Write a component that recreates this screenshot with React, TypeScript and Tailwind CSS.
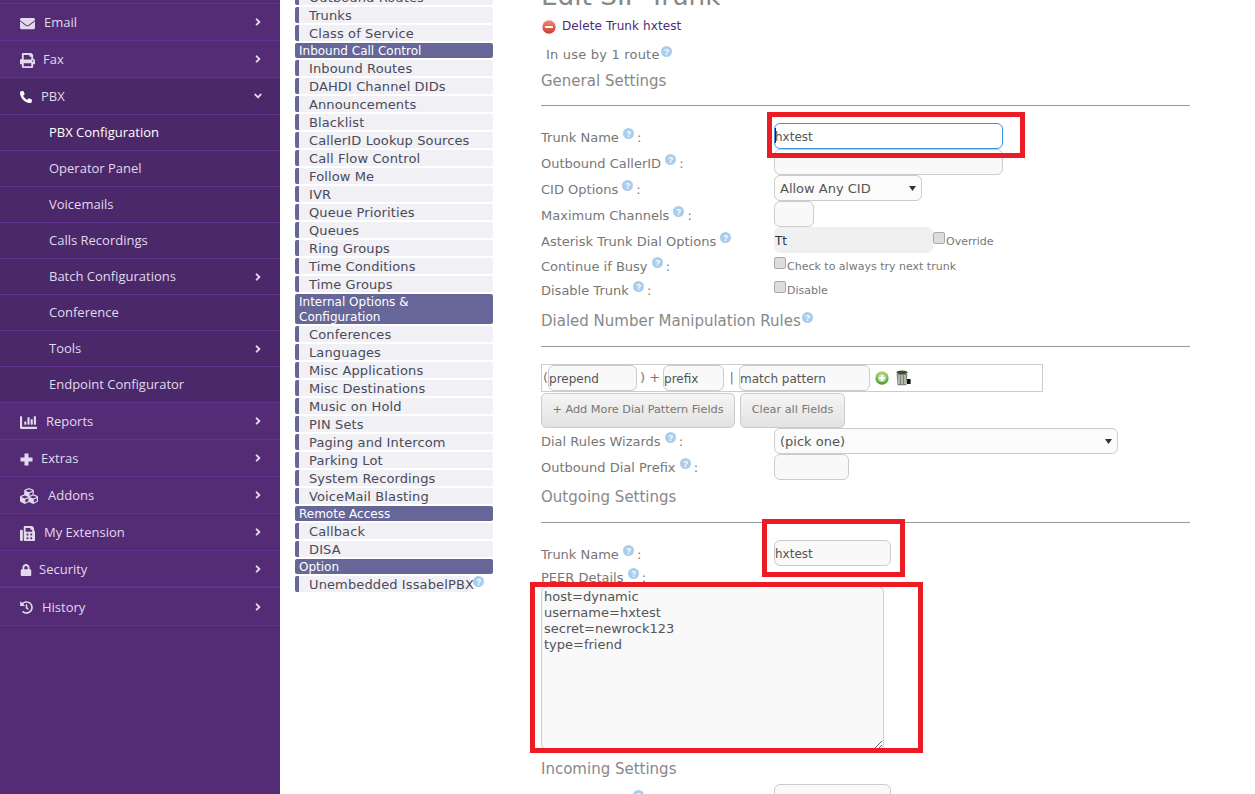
import React from 'react';
import { FaEnvelope, FaPrint, FaPhoneAlt, FaChartBar, FaCubes, FaFax, FaLock, FaHistory, FaAngleRight, FaAngleDown } from 'react-icons/fa';

const FONT = "font-['DejaVu_Sans','Liberation_Sans',sans-serif]";

function Help({ className = '' }: { className?: string }) {
    return (
        <svg width="11" height="11" viewBox="0 0 11 11" className={`inline-block align-top ${className}`}>
            <circle cx="5.5" cy="5.5" r="5.5" fill="#a9cdea" />
            <text x="5.5" y="8.6" textAnchor="middle" fontSize="8.5" fontWeight="700" fill="#fff" fontFamily="Liberation Sans, sans-serif">?</text>
        </svg>
    );
}

function PlusIcon() {
    return (
        <svg width="13" height="13" viewBox="0 0 13 13">
            <path d="M4.5 0.5h4v4h4v4h-4v4h-4v-4h-4v-4h4z" fill="currentColor" />
        </svg>
    );
}

const topItems = [
    { label: 'Email', icon: <FaEnvelope size={15} />, w: 'w-[24px]' },
    { label: 'Fax', icon: <FaPrint size={15} />, w: 'w-[23px]' },
];
const subItems = [
    { label: 'PBX Configuration', arrow: false, strong: true },
    { label: 'Operator Panel', arrow: false },
    { label: 'Voicemails', arrow: false },
    { label: 'Calls Recordings', arrow: false },
    { label: 'Batch Configurations', arrow: true },
    { label: 'Conference', arrow: false },
    { label: 'Tools', arrow: true },
    { label: 'Endpoint Configurator', arrow: false },
];
const bottomItems = [
    { label: 'Reports', icon: <FaChartBar size={17} />, w: 'w-[26px]', h: 'h-[37px]', border: 'border-b border-[#5e3490]' },
    { label: 'Extras', icon: <PlusIcon />, w: 'w-[21px]', h: 'h-[37px]', border: 'border-b border-[#5e3490]' },
    { label: 'Addons', icon: <FaCubes size={18} />, w: 'w-[28px]', h: 'h-[37px]', border: 'border-b border-[#5e3490]' },
    { label: 'My Extension', icon: <FaFax size={15} />, w: 'w-[24px]', h: 'h-[37px]', border: 'border-b border-[#5e3490]' },
    { label: 'Security', icon: <FaLock size={12} />, w: 'w-[19px]', h: 'h-[37px]', border: 'border-b-2 border-[#5e3490]' },
    { label: 'History', icon: <FaHistory size={13} />, w: 'w-[22px]', h: 'h-[38px]', border: 'border-b border-[#5e3490]' },
];

function Chevron() {
    return <span className="mb-[2px]"><FaAngleRight size={12} /></span>;
}

function Sidebar() {
    return (
        <div className="w-[280px] shrink-0 bg-[#532c75] text-[13px] text-[#e2d9ec] font-['Open_Sans','Liberation_Sans',sans-serif]">
            <div className="h-[4px] border-b border-[#5e3490]"></div>
            {topItems.map((it) => (
                <div key={it.label} className="h-[37px] border-b border-[#5e3490] flex items-center pl-[20px] pr-[16px] pt-[2px]">
                    <span className={`${it.w} shrink-0`}>{it.icon}</span>
                    <span className="flex-1">{it.label}</span>
                    <Chevron />
                </div>
            ))}
            <div className="bg-[#4a2869]">
                <div className="h-[37px] border-b border-[#5e3490] flex items-center pl-[20px] pr-[16px] pt-[2px]">
                    <span className="w-[21px] shrink-0 text-white"><FaPhoneAlt size={12} /></span>
                    <span className="flex-1">PBX</span>
                    <span className="mb-[2px]"><FaAngleDown size={12} /></span>
                </div>
                {subItems.map((it) => (
                    <div key={it.label} className={`h-[36px] border-b border-[#5e3490] flex items-center pl-[49px] pr-[16px] ${it.strong ? 'text-white' : ''}`}>
                        <span className="flex-1">{it.label}</span>
                        {it.arrow && <FaAngleRight size={12} />}
                    </div>
                ))}
            </div>
            {bottomItems.map((it) => (
                <div key={it.label} className={`${it.h} ${it.border} flex items-center pl-[20px] pr-[16px] pt-[2px]`}>
                    <span className={`${it.w} shrink-0`}>{it.icon}</span>
                    <span className="flex-1">{it.label}</span>
                    <Chevron />
                </div>
            ))}
        </div>
    );
}

function MenuHead({ children, tall }: { children: React.ReactNode; tall?: boolean }) {
    return (
        <div className={`bg-[#666699] text-white text-[12px] rounded-[2px] pl-[4px] pt-[1px] leading-[15px] mb-[2px] ${tall ? 'h-[30px]' : 'h-[15px]'}`}>
            {children}
        </div>
    );
}

function MenuItem({ children }: { children: React.ReactNode }) {
    return (
        <div className="h-[16px] mb-[2px] leading-[18px] tracking-[0.12px] bg-[#f0f0f5] border-l-[4px] border-[#666699] rounded-[2px] pl-[10px] text-[#4a4a5a]">
            {children}
        </div>
    );
}

const group1 = ['Outbound Routes', 'Trunks', 'Class of Service'];
const group2 = ['Inbound Routes', 'DAHDI Channel DIDs', 'Announcements', 'Blacklist', 'CallerID Lookup Sources', 'Call Flow Control', 'Follow Me', 'IVR', 'Queue Priorities', 'Queues', 'Ring Groups', 'Time Conditions', 'Time Groups'];
const group3 = ['Conferences', 'Languages', 'Misc Applications', 'Misc Destinations', 'Music on Hold', 'PIN Sets', 'Paging and Intercom', 'Parking Lot', 'System Recordings', 'VoiceMail Blasting'];

function Menu() {
    return (
        <div className={`ml-[15px] w-[198px] shrink-0 -mt-[11px] text-[13px] ${FONT}`}>
            {group1.map((t) => <MenuItem key={t}>{t}</MenuItem>)}
            <MenuHead>Inbound Call Control</MenuHead>
            {group2.map((t) => <MenuItem key={t}>{t}</MenuItem>)}
            <MenuHead tall>Internal Options &amp; Configuration</MenuHead>
            {group3.map((t) => <MenuItem key={t}>{t}</MenuItem>)}
            <MenuHead>Remote Access</MenuHead>
            <MenuItem>Callback</MenuItem>
            <MenuItem>DISA</MenuItem>
            <MenuHead>Option</MenuHead>
            <div className="flex items-start">
                <div className="h-[16px] leading-[18px] tracking-[0.12px] bg-[#f0f0f5] border-l-[4px] border-[#666699] rounded-[2px] pl-[10px] text-[#4a4a5a] w-[176px] whitespace-nowrap">Unembedded IssabelPBX</div>
                <Help className="ml-[2px]" />
            </div>
        </div>
    );
}

function Label({ text, colon = true, pt = 'pt-[4px]' }: { text: string; colon?: boolean; pt?: string }) {
    return (
        <div className={`w-[233px] shrink-0 text-[13px] text-[#777777] whitespace-nowrap ${pt}`}>
            {text}
            <Help className="ml-[4px]" />
            {colon && <span className="ml-[-1px]"> :</span>}
        </div>
    );
}

function Row({ label, colon, h = 'h-[26px]', pt, children }: { label: string; colon?: boolean; h?: string; pt?: string; children: React.ReactNode }) {
    return (
        <div className={`flex items-center ${h}`}>
            <Label text={label} colon={colon} pt={pt} />
            {children}
        </div>
    );
}

const field = 'h-[26px] rounded-[6px] border border-[#cccccc] bg-[#f9f9f9] text-[12px] text-[#555555] pl-[0px] pt-[1px] outline-none';

function Section({ children, h }: { children: React.ReactNode; h: string }) {
    return <div className={`${h} pt-[2px] flex items-center text-[15px] text-[#888888]`}>{children}</div>;
}

function Check({ label }: { label: string }) {
    return (
        <div className="flex items-center text-[#777777] text-[11px]">
            <input type="checkbox" readOnly className="appearance-none w-[12px] h-[12px] mr-[1px] mb-[4px] rounded-[2px] border border-[#aaaaaa] bg-[#dddddd]" />
            <span className="mt-[4px]">{label}</span>
        </div>
    );
}

function Picker({ w, text }: { w: string; text: string }) {
    return (
        <div className={`relative ${w}`}>
            <select className="w-full h-[26px] appearance-none rounded-[6px] border border-[#cccccc] bg-[#fbfbfb] text-[13px] text-[#555555] pl-[5px] pt-[1px] outline-none" defaultValue={text}>
                <option value={text}>{text}</option>
            </select>
            <svg width="7" height="5" viewBox="0 0 7 5" className="absolute right-[6px] top-[11px]">
                <path d="M0 0h7L3.5 5z" fill="#333333" />
            </svg>
        </div>
    );
}

function DeleteIcon() {
    return (
        <svg width="14" height="14" viewBox="0 0 14 14" className="shrink-0 mt-[2px]">
            <defs>
                <linearGradient id="redg" x1="0" y1="0" x2="0" y2="1">
                    <stop offset="0" stopColor="#f08a7c" />
                    <stop offset="1" stopColor="#d23a2c" />
                </linearGradient>
            </defs>
            <circle cx="7" cy="7" r="6.7" fill="url(#redg)" />
            <rect x="3.2" y="6" width="7.6" height="2" fill="#fff" />
        </svg>
    );
}

function AddIcon() {
    return (
        <svg width="14" height="14" viewBox="0 0 14 14" className="shrink-0">
            <defs>
                <linearGradient id="greeng" x1="0" y1="0" x2="0" y2="1">
                    <stop offset="0" stopColor="#a8d878" />
                    <stop offset="1" stopColor="#4f9a32" />
                </linearGradient>
            </defs>
            <circle cx="7" cy="7" r="6.7" fill="url(#greeng)" />
            <circle cx="7" cy="7" r="4" fill="#b9e0a0" />
            <path d="M6 4h2v2h2v2H8v2H6V8H4V6h2z" fill="#fff" />
        </svg>
    );
}

function TrashIcon() {
    return (
        <svg width="16" height="16" viewBox="0 0 16 16" className="shrink-0">
            <ellipse cx="7" cy="2.4" rx="5.6" ry="2" fill="#3f4a3c" />
            <path d="M1.6 4h10.8l-1 11.2H2.6z" fill="#7c8676" />
            <path d="M4 5v9M7 5v9M10 5v9" stroke="#e5e8e0" strokeWidth="1" />
            <rect x="12" y="9" width="3.6" height="5" fill="#111" />
        </svg>
    );
}

function Main() {
    return (
        <div className={`relative ml-[48px] w-[649px] shrink-0 ${FONT}`}>
            <div className="h-[32px] -mt-[22px] leading-[36px] text-[26.3px] text-[#888888] whitespace-nowrap">Edit SIP Trunk</div>
            <div className="h-[32px] flex items-center text-[12px] text-[#4a2c78] pl-[1px]">
                <DeleteIcon />
                <span className="ml-[6px] tracking-[0.1px]">Delete Trunk hxtest</span>
            </div>
            <div className="h-[26px] flex items-center text-[13px] text-[#777777] pl-[5px]">
                <span className="tracking-[0.2px]">In use by 1 route</span>
                <Help className="-mt-[7px] ml-[1px]" />
            </div>
            <Section h="h-[24px]">General Settings</Section>
            <hr className="mt-[13px] border-t border-[#999999]" />

            <div className="mt-[17px]">
                <Row label="Trunk Name">
                    <div className="relative">
                        <input readOnly value="hxtest" className={`${field} block w-[229px] !border-[#3b93e0] !bg-white`} />
                        <span className="absolute left-[1px] top-[5px] h-[15px] w-px bg-[#222222]"></span>
                    </div>
                </Row>
                <Row label="Outbound CallerID">
                    <input readOnly value="" className={`${field} w-[229px]`} />
                </Row>
                <Row label="CID Options">
                    <Picker w="w-[148px]" text="Allow Any CID" />
                </Row>
                <Row label="Maximum Channels">
                    <input readOnly value="" className={`${field} w-[40px]`} />
                </Row>
                <Row label="Asterisk Trunk Dial Options" colon={false}>
                    <input readOnly value="Tt" className={`${field} w-[159px] !bg-[#f0f0f0] !border-[#f0f0f0] !text-[#333333]`} />
                    <Check label="Override" />
                </Row>
                <Row label="Continue if Busy" h="h-[24px]">
                    <Check label="Check to always try next trunk" />
                </Row>
                <Row label="Disable Trunk" h="h-[24px]">
                    <Check label="Disable" />
                </Row>
            </div>

            <Section h="h-[38px]">
                Dialed Number Manipulation Rules
                <Help className="ml-[1px] -mt-[7px]" />
            </Section>
            <hr className="mt-[7px] border-t border-[#999999]" />

            <div className="mt-[17px] w-[502px] h-[28px] border border-[#cccccc] flex items-center text-[13px] text-[#777777] pl-[1px]">
                <span>(</span>
                <input readOnly value="prepend" className={`${field} w-[89px]`} />
                <span className="w-[26px] text-center">) +</span>
                <input readOnly value="prefix" className={`${field} w-[61px]`} />
                <span className="w-[15px] text-center">|</span>
                <input readOnly value="match pattern" className={`${field} w-[131px]`} />
                <span className="ml-[5px]"><AddIcon /></span>
                <span className="ml-[6px]"><TrashIcon /></span>
            </div>
            <div className="mt-[1px] h-[35px] flex gap-[5px]">
                <button className="w-[194px] rounded-[5px] border border-[#cccccc] bg-gradient-to-b from-[#f5f5f5] to-[#e2e2e2] text-[11.25px] text-[#777777]">+ Add More Dial Pattern Fields</button>
                <button className="w-[105px] rounded-[5px] border border-[#cccccc] bg-gradient-to-b from-[#f5f5f5] to-[#e2e2e2] text-[11.25px] text-[#777777]">Clear all Fields</button>
            </div>
            <Row label="Dial Rules Wizards" pt="pt-[2px]">
                <Picker w="w-[344px]" text="(pick one)" />
            </Row>
            <Row label="Outbound Dial Prefix" pt="pt-[2px]">
                <input readOnly value="" className={`${field} w-[75px]`} />
            </Row>
            <Section h="h-[32px]">Outgoing Settings</Section>
            <hr className="mt-[10px] border-t border-[#999999]" />

            <div className="mt-[17px]">
                <Row label="Trunk Name">
                    <input readOnly value="hxtest" className={`${field} w-[117px]`} />
                </Row>
            </div>
            <div className="h-[20px] flex items-center">
                <Label text="PEER Details" />
            </div>
            <textarea
                readOnly
                value={'host=dynamic\nusername=hxtest\nsecret=newrock123\ntype=friend'}
                className="block w-[343px] h-[164px] rounded-[6px] border border-[#cccccc] bg-[#f9f9f9] text-[13px] leading-[16px] text-[#555555] pl-[2px] pt-[2px] outline-none"
            />
            <Section h="h-[36px]">Incoming Settings</Section>
            <div className="-mt-[2px] flex h-[26px]">
                <div className="w-[233px] shrink-0 pl-[92px] pt-[6px]"><Help /></div>
                <input readOnly value="" className={`${field} w-[117px]`} />
            </div>

            {/* red annotation boxes */}
            <div className="absolute left-[226px] top-[112px] w-[258px] h-[46px] border-[5px] border-[#ed1c24]"></div>
            <div className="absolute left-[221px] top-[519px] w-[143px] h-[58px] border-[5px] border-[#ed1c24]"></div>
            <div className="absolute left-[-11px] top-[582px] w-[393px] h-[171px] border-[5px] border-[#ed1c24]"></div>
        </div>
    );
}

export default function App() {
    return (
        <div className="w-[1255px] h-[794px] overflow-hidden flex bg-white">
            <Sidebar />
            <Menu />
            <Main />
        </div>
    );
}
